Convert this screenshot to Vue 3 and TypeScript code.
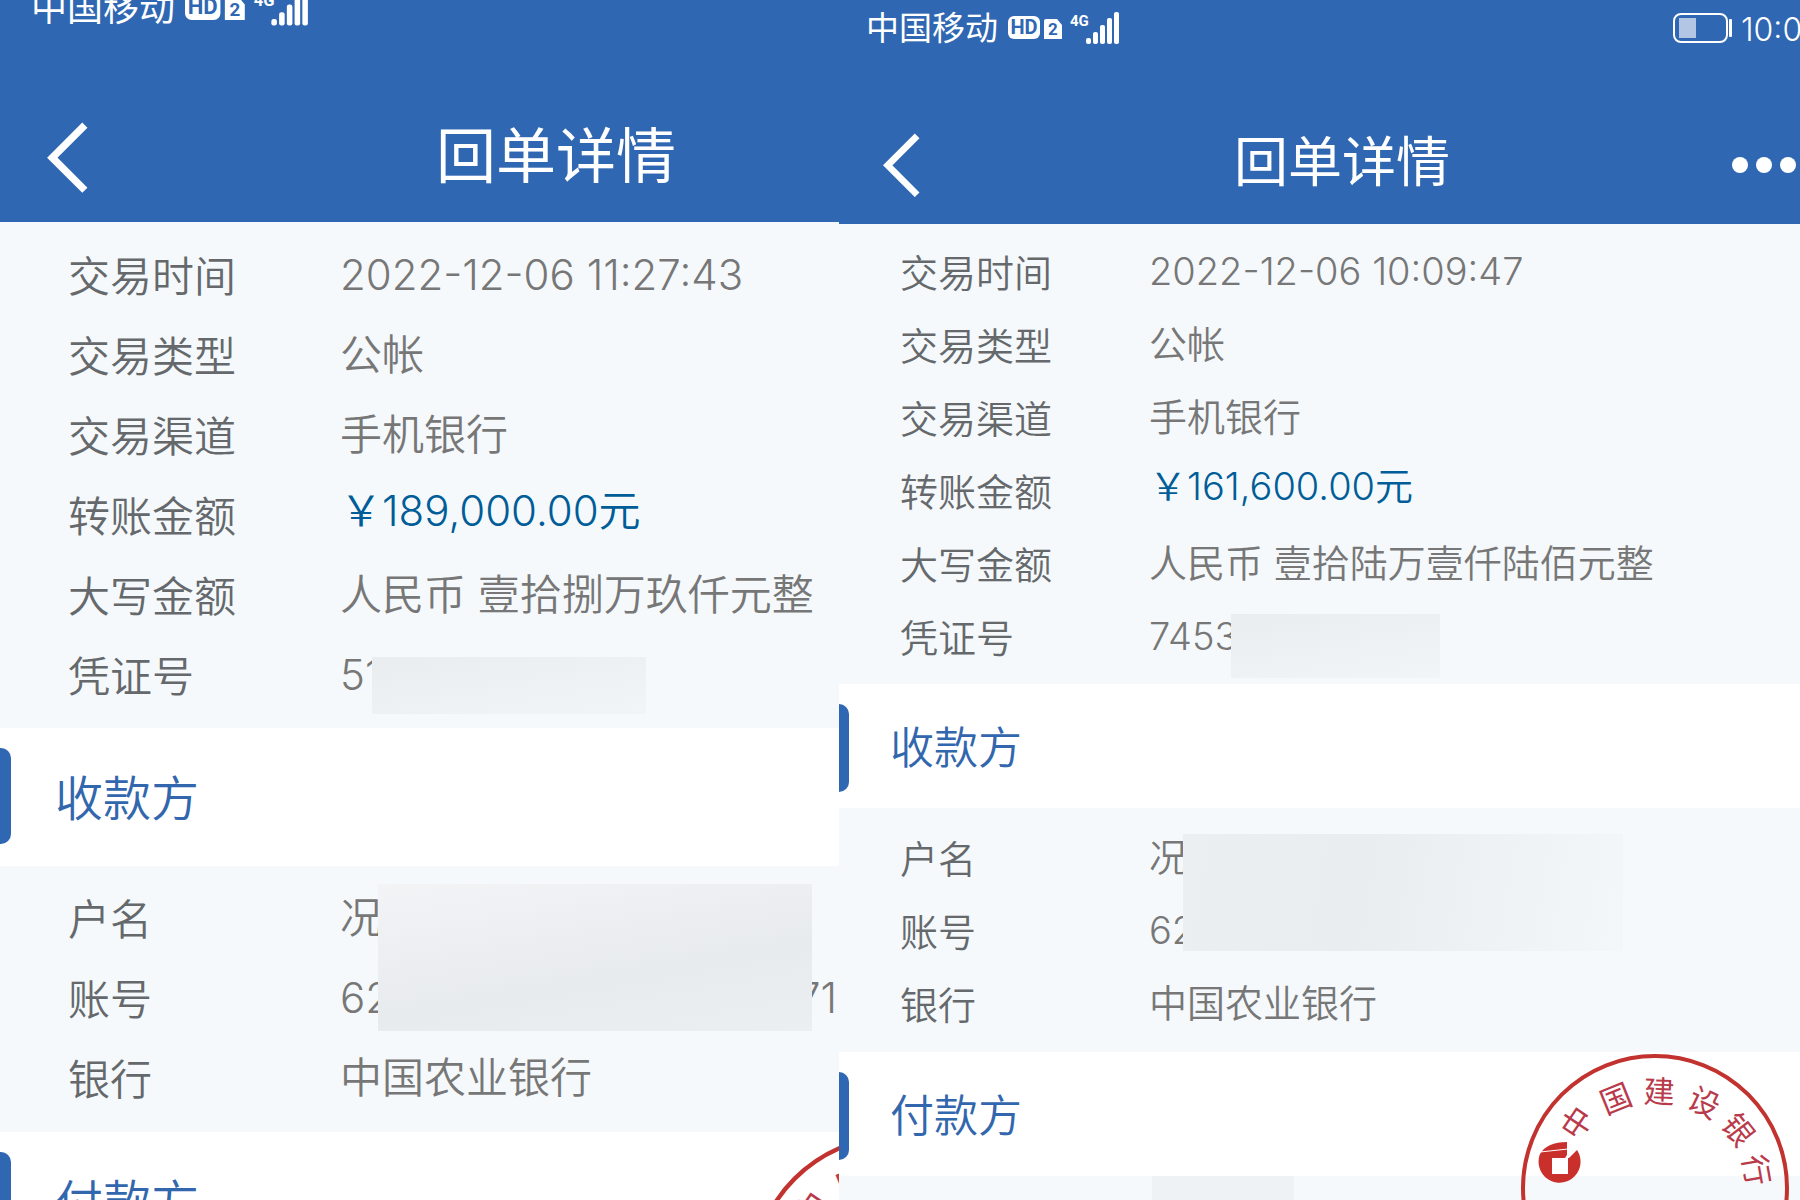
<script setup lang="ts">
interface Row {
  label: string
  value: string
  tail?: string
  amount?: boolean
}

interface Receipt {
  key: string
  clock: string
  details: Row[]
  payee: Row[]
}

interface SealChar {
  char: string
  x: number
  y: number
  angle: number
}

const receipts: Receipt[] = [
  {
    key: 'first',
    clock: '',
    details: [
      { label: '交易时间', value: '2022-12-06 11:27:43' },
      { label: '交易类型', value: '公帐' },
      { label: '交易渠道', value: '手机银行' },
      { label: '转账金额', value: '￥189,000.00元', amount: true },
      { label: '大写金额', value: '人民币 壹拾捌万玖仟元整' },
      { label: '凭证号', value: '51' },
    ],
    payee: [
      { label: '户名', value: '况' },
      { label: '账号', value: '62', tail: '71' },
      { label: '银行', value: '中国农业银行' },
    ],
  },
  {
    key: 'second',
    clock: '10:0',
    details: [
      { label: '交易时间', value: '2022-12-06 10:09:47' },
      { label: '交易类型', value: '公帐' },
      { label: '交易渠道', value: '手机银行' },
      { label: '转账金额', value: '￥161,600.00元', amount: true },
      { label: '大写金额', value: '人民币 壹拾陆万壹仟陆佰元整' },
      { label: '凭证号', value: '7453' },
    ],
    payee: [
      { label: '户名', value: '况' },
      { label: '账号', value: '62' },
      { label: '银行', value: '中国农业银行' },
    ],
  },
]

const sealChars: SealChar[] = [
  { char: '中', x: 57, y: 70, angle: -56 },
  { char: '国', x: 96, y: 46, angle: -22 },
  { char: '建', x: 139, y: 39, angle: 2 },
  { char: '设', x: 184, y: 50, angle: 26 },
  { char: '银', x: 218, y: 77, angle: 52 },
  { char: '行', x: 236, y: 117, angle: 80 },
]
</script>

<template>
  <main class="board">
    <article v-for="r in receipts" :key="r.key" class="pane" :class="r.key">
      <header class="top">
        <div class="status">
          <span class="carrier">中国移动</span>
          <svg class="signal" viewBox="0 0 112 34" aria-hidden="true">
            <rect x="0" y="5" width="32" height="23" rx="6" fill="#fff" />
            <text x="16" y="23" text-anchor="middle" class="tag">HD</text>
            <path d="M38 8h11l5 6v14H36V10q0-2 2-2z" fill="#fff" />
            <text x="45" y="24" text-anchor="middle" class="tag small">2</text>
            <text x="62" y="15" class="net">4G</text>
            <g fill="#fff">
              <rect x="78" y="27" width="5" height="6" rx="2" />
              <rect x="85" y="21" width="5" height="12" rx="2" />
              <rect x="92" y="14" width="5" height="19" rx="2" />
              <rect x="99" y="7" width="5" height="26" rx="2" />
              <rect x="106" y="1" width="5" height="32" rx="2" />
            </g>
          </svg>
          <div v-if="r.clock" class="power">
            <svg class="battery" viewBox="0 0 60 32" aria-hidden="true">
              <rect x="1" y="2" width="53" height="28" rx="7" fill="none" stroke="#fff" stroke-width="2" />
              <rect x="6" y="6" width="17" height="20" fill="#b3c6e4" />
              <rect x="56" y="7" width="3" height="18" rx="1" fill="#fff" />
            </svg>
            <span>{{ r.clock }}</span>
          </div>
        </div>
        <nav class="nav">
          <button type="button" class="back" aria-label="返回">
            <svg viewBox="0 0 40 68" aria-hidden="true">
              <path d="M37 3 6 34l31 31" fill="none" stroke="#fff" stroke-width="7" />
            </svg>
          </button>
          <h1>回单详情</h1>
          <button v-if="r.clock" type="button" class="more" aria-label="更多">
            <svg viewBox="0 0 66 18" fill="#fff" aria-hidden="true">
              <circle cx="9" cy="9" r="8" />
              <circle cx="33" cy="9" r="8" />
              <circle cx="57" cy="9" r="8" />
            </svg>
          </button>
        </nav>
      </header>

      <dl class="rows details">
        <div v-for="row in r.details" :key="row.label" class="row">
          <dt>{{ row.label }}</dt>
          <dd :class="{ amount: row.amount }">{{ row.value }}</dd>
        </div>
        <span class="mask voucher"></span>
      </dl>

      <h2 class="section">收款方</h2>
      <dl class="rows payee">
        <div v-for="row in r.payee" :key="row.label" class="row">
          <dt>{{ row.label }}</dt>
          <dd>
            {{ row.value }}<span v-if="row.tail" class="tail">{{ row.tail }}</span>
          </dd>
        </div>
        <span class="mask account"></span>
      </dl>

      <section class="payer">
        <h2 class="section">付款方</h2>
        <div class="rows next"><span class="mask payer-name"></span></div>
        <svg class="seal" viewBox="0 0 270 270" role="img" aria-label="中国建设银行">
          <circle cx="135" cy="135" r="132" fill="none" stroke="#c2322f" stroke-width="4" />
          <text
            v-for="c in sealChars"
            :key="c.char"
            :transform="`translate(${c.x} ${c.y}) rotate(${c.angle})`"
            y="11"
            text-anchor="middle"
          >{{ c.char }}</text>
          <path
            fill="#c9302c"
            fill-rule="evenodd"
            d="M20 101Q27 89 47 89v13l-2 3 4 0 8-8A21 21 0 1 1 20 101zM32 105v16h16v-16z"
          />
          <path d="M20 99l28-3" fill="none" stroke="#fff" stroke-width="1" />
        </svg>
      </section>
    </article>
  </main>
</template>

<style>
body {
  margin: 0;
}
</style>

<style scoped>
.board {
  display: grid;
  grid-template-columns: 839fr 961fr;
  height: 100vh;
  overflow: hidden;
  background: #fff;
  font-family: Inter, "Noto Sans CJK SC", sans-serif;
  font-weight: 300;
}

.pane {
  position: relative;
  min-width: 0;
  overflow: hidden;
}

.first {
  --status: 16px;
  --nav-pad: 78px;
  --nav: 128px;
  --carrier: 36px;
  --carrier-x: 31px;
  --signal: 124px;
  --back-x: 46px;
  --back: 42px;
  --title-x: 348px;
  --title: 60px;
  --text: 42px;
  --row: 80px;
  --label-x: 68px;
  --label: 272px;
  --pad: 15px;
  --pad-end: 11px;
  --section: 138px;
  --heading: 48px;
  --heading-x: 55px;
  --bar: 11px;
  --bar-h: 96px;
  --pad-payee: 14px;
  --pad-payee-end: 12px;
  --seal: 296px;
  --seal-x: 749px;
}

.second {
  --status: 56px;
  --nav-pad: 50px;
  --nav: 118px;
  --carrier: 33px;
  --carrier-x: 27px;
  --signal: 112px;
  --back-x: 43px;
  --back: 38px;
  --title-x: 314px;
  --title: 54px;
  --text: 38px;
  --row: 73px;
  --label-x: 61px;
  --label: 249px;
  --pad: 12px;
  --pad-end: 10px;
  --section: 124px;
  --heading: 44px;
  --heading-x: 51px;
  --bar: 10px;
  --bar-h: 88px;
  --pad-payee: 14px;
  --pad-payee-end: 11px;
  --seal: 270px;
  --seal-x: 681px;
}

.top {
  background: #2f67b2;
  color: #fff;
}

.status {
  display: flex;
  align-items: center;
  gap: 10px;
  height: var(--status);
  padding-left: var(--carrier-x);
  white-space: nowrap;
}

.carrier {
  font-size: var(--carrier);
  line-height: 1;
  font-weight: 400;
}

.signal {
  flex: none;
  width: var(--signal);
}

.tag {
  font: 700 20px Roboto, sans-serif;
  fill: #2f67b2;
}

.tag.small {
  font-size: 17px;
}

.net {
  font: 700 15px Roboto, sans-serif;
  fill: #fff;
}

.power {
  display: flex;
  align-items: center;
  gap: 8px;
  flex: none;
  width: 127px;
  padding-top: 4px;
  margin-left: auto;
  overflow: hidden;
  font-size: 32px;
  line-height: 40px;
}

.battery {
  flex: none;
  width: 60px;
  padding-bottom: 4px;
}

.nav {
  display: flex;
  align-items: center;
  height: var(--nav);
  padding-top: var(--nav-pad);
  padding-left: var(--back-x);
}

button {
  flex: none;
  display: flex;
  padding: 0;
  border: 0;
  background: none;
}

.back svg {
  width: var(--back);
}

h1 {
  margin: 0 0 0 var(--title-x);
  padding-bottom: 4px;
  font-size: var(--title);
  font-weight: 400;
  line-height: 1;
  white-space: nowrap;
}

.more {
  margin: 0 3px 0 auto;
}

.more svg {
  width: 66px;
}

.rows {
  position: relative;
  margin: 0;
  background: #f5f9fc;
}

.details {
  padding: var(--pad) 0 var(--pad-end);
}

.payee {
  padding: var(--pad-payee) 0 var(--pad-payee-end);
}

.next {
  min-height: 120px;
}

.row {
  display: flex;
  align-items: center;
  height: var(--row);
  padding-left: var(--label-x);
  font-size: var(--text);
  line-height: 1;
  white-space: nowrap;
}

dt {
  flex: none;
  width: var(--label);
  color: #65696c;
  font-weight: 350;
}

dd {
  display: flex;
  flex: 1;
  margin: 0;
  padding-bottom: 4px;
  color: #777;
  font-weight: 350;
  white-space: pre;
}

.amount {
  padding-bottom: 12px;
  color: #005d98;
}

.tail {
  margin-left: auto;
  padding-right: 2px;
}

.section {
  position: relative;
  display: flex;
  align-items: center;
  box-sizing: border-box;
  height: var(--section);
  margin: 0;
  padding-top: 4px;
  padding-left: var(--heading-x);
  background: #fff;
  color: #3267ae;
  font-size: var(--heading);
  font-weight: 350;
  line-height: 1;
}

.section::before {
  content: "";
  position: absolute;
  left: 0;
  top: 20px;
  width: var(--bar);
  height: var(--bar-h);
  border-radius: 0 10px 10px 0;
  background: #2f67b2;
}

.mask {
  position: absolute;
  background: linear-gradient(170deg, #e9edef, #f2f5f7);
}

.first .voucher {
  left: 372px;
  bottom: 14px;
  width: 274px;
  height: 57px;
}

.second .voucher {
  left: 392px;
  bottom: 6px;
  width: 209px;
  height: 64px;
}

.account {
  background: linear-gradient(170deg, #f2f4f6, #e8ebed 60%, #eceff1);
}

.first .account {
  left: 378px;
  top: 18px;
  width: 434px;
  height: 147px;
}

.second .account {
  left: 344px;
  top: 26px;
  width: 440px;
  height: 117px;
  background: linear-gradient(100deg, #eceff1, #e9edef 40%, #f4f7fa);
}

.second .payer-name {
  left: 313px;
  top: 0;
  width: 142px;
  height: 80px;
  background: #eff2f4;
}

.payer {
  position: relative;
}

.seal {
  position: absolute;
  left: var(--seal-x);
  top: 1px;
  width: var(--seal);
}

.seal text {
  font-family: "Liberation Serif", "Noto Sans CJK SC", serif;
  font-size: 31px;
  font-weight: 400;
  fill: #b93a4a;
}
</style>
